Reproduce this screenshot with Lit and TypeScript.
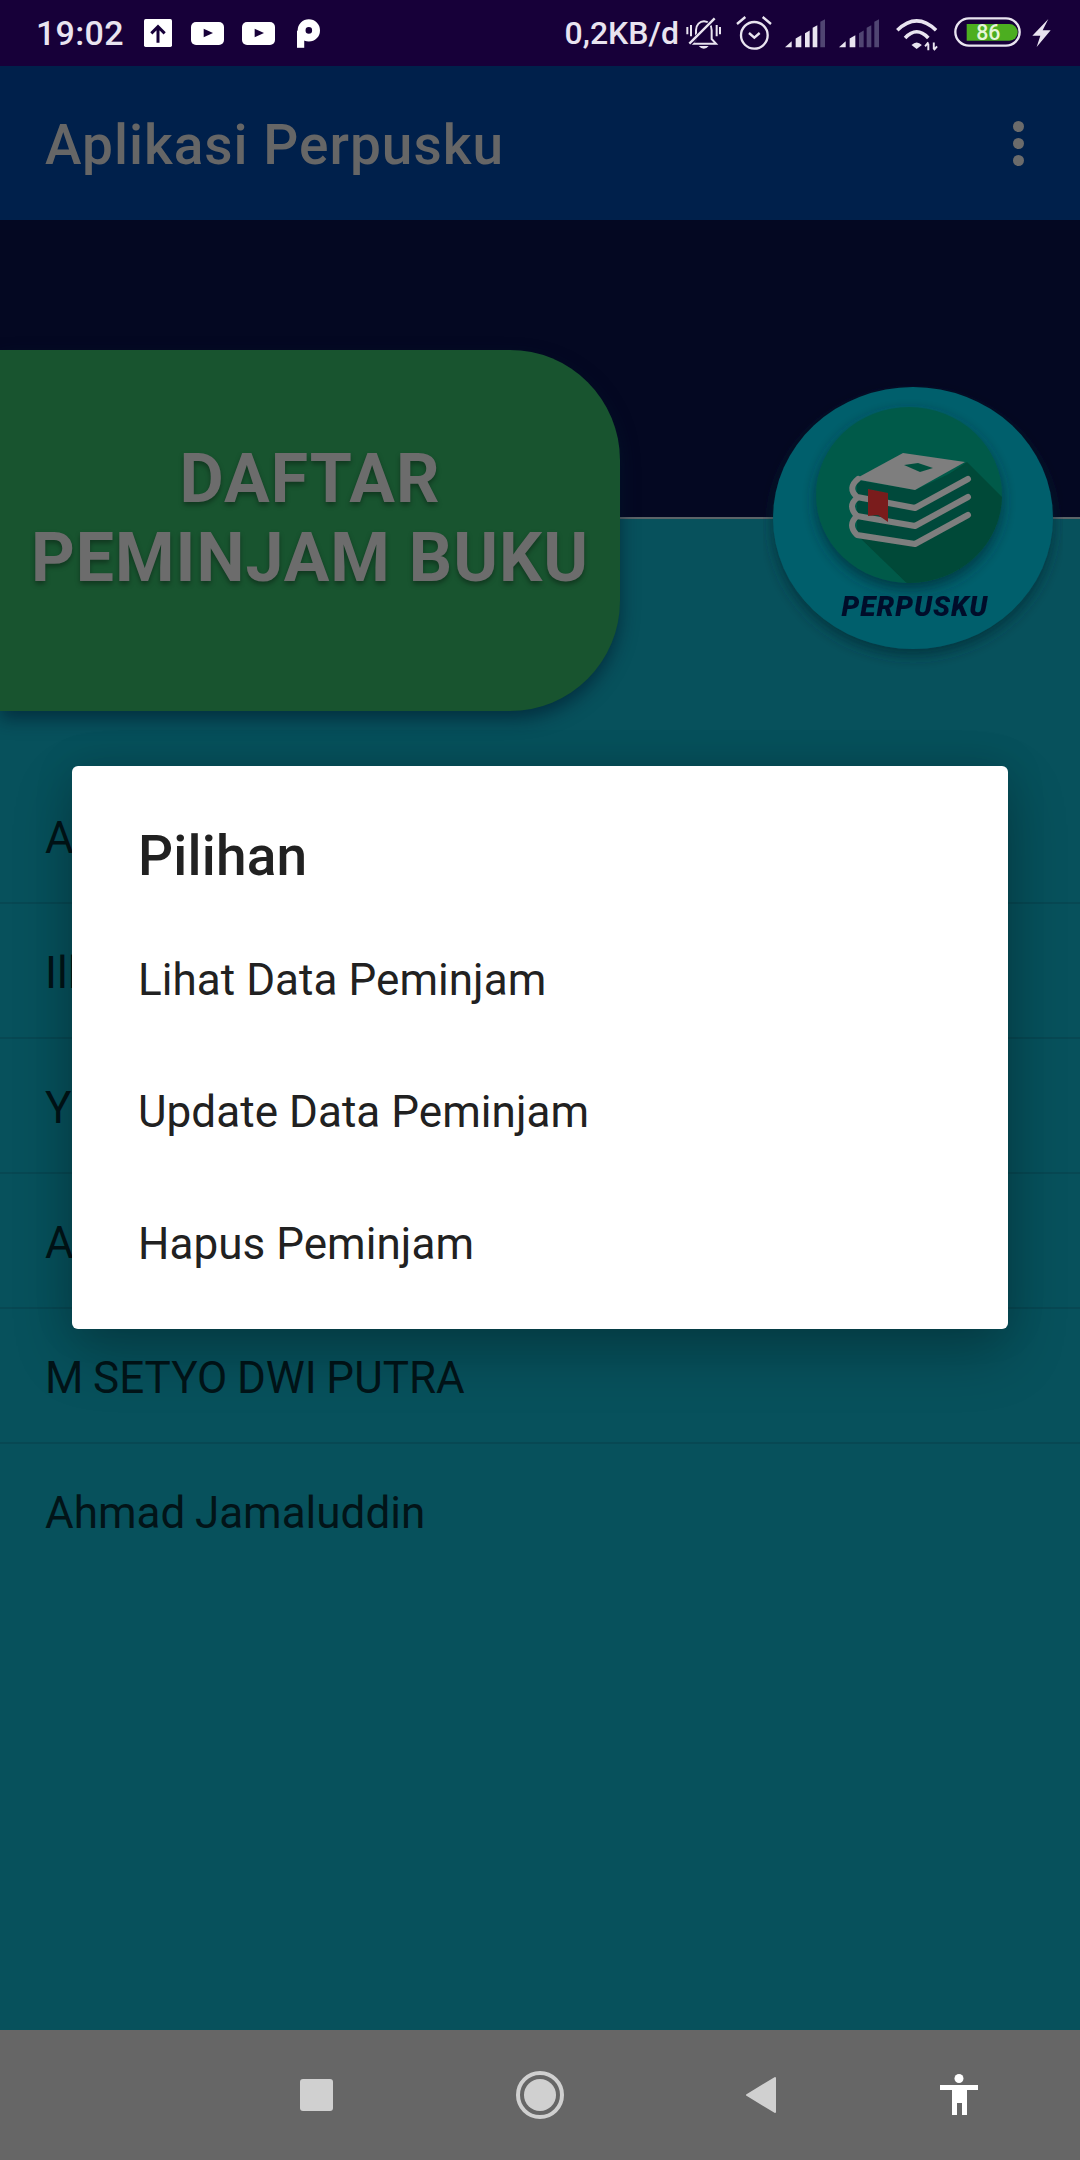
import { LitElement, html, css, svg } from 'lit';
import { customElement } from 'lit/decorators.js';

// the first four names are covered by the dialog, only their first letters show
const NAMES = ['A', 'Ill', 'Y', 'A', 'M SETYO DWI PUTRA', 'Ahmad Jamaluddin'];
const OPTIONS = ['Lihat Data Peminjam', 'Update Data Peminjam', 'Hapus Peminjam'];

@customElement('app-root')
export class AppRoot extends LitElement {
  static styles = css`
    :host {
      display: block;
      font-family: Roboto, 'Liberation Sans', sans-serif;
    }

    .screen {
      position: relative;
      display: flex;
      flex-direction: column;
      width: 1080px;
      height: 2160px;
      overflow: hidden;
      background: #07515c;
    }

    /* status bar */
    .status {
      display: flex;
      align-items: center;
      height: 66px;
      flex: none;
      background: #170039;
      color: #e9e4f0;
      font-weight: 500;
    }

    .status svg {
      display: block;
      flex: none;
    }

    .time {
      margin-left: 36px;
      width: 87px;
      font-size: 34px;
      line-height: 66px;
      letter-spacing: 0.3px;
    }

    .speed {
      margin-left: auto;
      font-size: 32px;
      line-height: 66px;
    }

    .i-up { margin-left: 21px; }
    .i-yt { margin-left: 19px; }
    .i-yt2 { margin-left: 18px; }
    .i-p { margin-left: 22px; }
    .i-bell { margin-left: 7px; }
    .i-alarm { margin-left: 15px; }
    .i-sig { margin-left: 13px; }
    .i-sig2 { margin-left: 14px; }
    .i-wifi { margin-left: 17px; margin-top: 3px; }
    .i-batt { margin-left: 16px; margin-top: -2px; }
    .i-bolt { margin: 0 29px 0 11px; }

    /* app bar */
    .appbar {
      display: flex;
      align-items: center;
      justify-content: space-between;
      height: 154px;
      flex: none;
      padding: 0 56px 0 45px;
      box-sizing: border-box;
      background: #00204b;
    }

    .appbar h1 {
      margin: 4px 0 0;
      font-size: 55px;
      font-weight: 500;
      letter-spacing: 1px;
      color: #666;
    }

    .dots {
      display: flex;
      flex-direction: column;
      gap: 6px;
    }

    .dots span {
      width: 11px;
      height: 11px;
      border-radius: 50%;
      background: #6b6b6b;
    }

    /* header area: navy on top, teal below, with a thin line between */
    .hero {
      display: flex;
      align-items: flex-start;
      height: 547px;
      flex: none;
      box-sizing: border-box;
      padding-top: 130px;
      background: linear-gradient(#040822 0, #040822 297px, #5c6468 297px, #5c6468 299px, #07515c 299px);
    }

    .card {
      width: 620px;
      height: 361px;
      flex: none;
      box-sizing: border-box;
      padding-top: 90px;
      border-radius: 0 110px 110px 0;
      background: #18542f;
      box-shadow: 0 8px 18px rgba(0, 25, 45, 0.6);
      color: #6c6c6c;
      font-size: 68px;
      font-weight: 700;
      line-height: 79px;
      letter-spacing: 1px;
      text-align: center;
      text-shadow: 0 3px 5px rgba(0, 0, 0, 0.35);
    }

    .card span {
      display: block;
      filter: blur(0.6px);
    }

    .logo {
      display: block;
      flex: none;
      margin: 27px 0 0 143px;
    }

    /* list */
    .list {
      flex: 1;
      padding-top: 2px;
      background: #07515c;
    }

    .row {
      height: 135px;
      box-sizing: border-box;
      padding-left: 45px;
      border-bottom: 2px solid #074853;
      color: #021418;
      font-size: 44px;
      line-height: 139px;
      word-spacing: -1.3px;
      white-space: nowrap;
    }

    .row:last-child {
      border-bottom: none;
    }

    /* navigation bar */
    .nav {
      display: flex;
      align-items: center;
      height: 130px;
      flex: none;
      background: #666;
    }

    .nav svg {
      display: block;
      flex: none;
    }

    .n-square { margin-left: 300px; margin-top: -1px; }
    .n-home { margin-left: 183px; }
    .n-back { margin-left: 181px; }
    .n-a11y { margin-left: 163px; margin-top: -2px; }

    /* dialog on top of everything */
    .dialog {
      position: absolute;
      left: 72px;
      top: 766px;
      width: 936px;
      height: 563px;
      box-sizing: border-box;
      padding-left: 66px;
      border-radius: 6px;
      background: #fff;
      box-shadow: 0 24px 60px rgba(0, 0, 0, 0.24), 0 0 40px rgba(0, 0, 0, 0.12);
      color: #212121;
    }

    .dialog h2 {
      margin: 0;
      padding-top: 58px;
      height: 148px;
      box-sizing: border-box;
      font-size: 55px;
      font-weight: 500;
      line-height: 64px;
      letter-spacing: 0.2px;
    }

    .option {
      height: 132px;
      font-size: 44px;
      line-height: 132px;
      letter-spacing: 0.05px;
    }
  `;

  private signal(active: number) {
    const bars = [
      'M318 108 L338 90 V108 Z',
      'M350 108 V82 L367 72 V108 Z',
      'M378 108 V66 L392 58 V108 Z',
      'M401 108 V50 L415 42 V108 Z',
      'M424 108 V32 L438 24 V108 Z',
    ];
    return bars.map(
      (d, i) => svg`<path d=${d} fill=${i < active ? '#e9e4f0' : '#504572'}></path>`
    );
  }

  private statusBar() {
    return html`
      <div class="status">
        <span class="time">19:02</span>
        <svg class="i-up" width="28" height="28" viewBox="42 27 84 84">
          <rect x="42" y="27" width="84" height="84" rx="5" fill="#fff"></rect>
          <path d="M84 98 V52 M64 70 L84 50 L104 70" fill="none" stroke="#170039" stroke-width="9"></path>
        </svg>
        <svg class="i-yt" width="33" height="23" viewBox="184 35 99 69">
          <rect x="184" y="35" width="99" height="69" rx="15" fill="#fff"></rect>
          <path d="M222 55 L250 68 L222 81 Z" fill="#170039"></path>
        </svg>
        <svg class="i-yt2" width="33" height="23" viewBox="184 35 99 69">
          <rect x="184" y="35" width="99" height="69" rx="15" fill="#fff"></rect>
          <path d="M222 55 L250 68 L222 81 Z" fill="#170039"></path>
        </svg>
        <svg class="i-p" width="23" height="29" viewBox="498 27 70 87">
          <circle cx="534" cy="61" r="22" fill="none" stroke="#fff" stroke-width="24"></circle>
          <rect x="498" y="62" width="22" height="52" fill="#fff"></rect>
        </svg>

        <span class="speed">0,2KB/d</span>
        <svg class="i-bell" width="35" height="33" viewBox="20 20 105 99">
          <g fill="none" stroke="#e9e4f0" stroke-width="6">
            <path d="M38 100 L50 86 V60 C50 42 62 33 74 33 C86 33 97 42 97 60 V86 L110 100 Z"></path>
            <path d="M24 50 V72 M35 44 V78 M112 44 V78 M122 50 V72"></path>
          </g>
          <path d="M30 102 L108 22" stroke="#170039" stroke-width="13"></path>
          <path d="M30 100 L106 24" stroke="#e9e4f0" stroke-width="7"></path>
          <path d="M58 107 H88 Q74 124 58 107 Z" fill="#e9e4f0"></path>
        </svg>
        <svg class="i-alarm" width="36" height="35" viewBox="170 17 108 105">
          <g fill="none" stroke="#e9e4f0" stroke-width="7">
            <circle cx="225" cy="75" r="40"></circle>
            <path d="M209 68 L225 82 L241 68"></path>
            <path d="M173 41 L198 20 M250 20 L275 41"></path>
          </g>
        </svg>
        <svg class="i-sig" width="40" height="29" viewBox="318 24 120 86">${this.signal(4)}</svg>
        <svg class="i-sig2" width="40" height="29" viewBox="318 24 120 86">${this.signal(2)}</svg>
        <svg class="i-wifi" width="42" height="34" viewBox="48 22 130 102">
          <g fill="none" stroke="#e9e4f0" stroke-width="11">
            <path d="M52 58 Q112 0 172 58"></path>
            <path d="M76 82 Q112 44 148 82"></path>
          </g>
          <path d="M96 104 Q112 88 128 104 L112 116 Z" fill="#e9e4f0"></path>
          <path d="M148 100 V120 M138 108 L148 96 M165 96 V116 M175 108 L165 120" stroke="#e9e4f0" stroke-width="6" fill="none"></path>
        </svg>
        <svg class="i-batt" width="67" height="30" viewBox="222 22 201 90">
          <rect x="226" y="26" width="193" height="82" rx="41" fill="none" stroke="#e9e4f0" stroke-width="7"></rect>
          <path d="M260 43 H388 A25 25 0 0 1 388 93 H260 Z" fill="#4cae20"></path>
          <text x="325" y="90" text-anchor="middle" font-size="64" font-weight="500" fill="#e4f5d8">86</text>
        </svg>
        <svg class="i-bolt" width="19" height="28" viewBox="456 28 57 84">
          <path d="M505 28 L457 78 H481 L470 112 L512 62 H488 Z" fill="#e9e4f0"></path>
        </svg>
      </div>
    `;
  }

  private logo() {
    // drawn in full-page pixel coordinates, hence the viewBox origin
    return html`
      <svg class="logo" width="300" height="300" viewBox="763 377 300 300">
        <defs>
          <clipPath id="inner"><ellipse cx="909" cy="495" rx="93" ry="88"></ellipse></clipPath>
          <filter id="soft" x="-20%" y="-20%" width="140%" height="140%">
            <feGaussianBlur stdDeviation="0.7"></feGaussianBlur>
          </filter>
          <filter id="drop" x="-20%" y="-20%" width="140%" height="140%">
            <feDropShadow dx="0" dy="6" stdDeviation="7" flood-color="#002a36" flood-opacity="0.7"></feDropShadow>
          </filter>
        </defs>
        <ellipse cx="913" cy="518" rx="140" ry="131" fill="#055f6c" filter="url(#drop)"></ellipse>
        <ellipse cx="909" cy="495" rx="93" ry="88" fill="#065a4a" filter="url(#drop)"></ellipse>
        <g filter="url(#soft)">
          <g clip-path="url(#inner)">
            <path d="M967 462 L1030 525 L950 625 L857 535 Z" fill="#034838"></path>
          </g>
          <path d="M857 480 L915 490 L968 465 V515 L915 544 L857 535 Z" fill="#034a3a"></path>
          <path d="M857 478 L903 453 L965 462 L915 490 L860 480 Z" fill="#7e7e7e"></path>
          <path d="M904 465 L918 463 L933 468 L920 472 Z" fill="#03503e"></path>
          <g fill="none" stroke="#7e7e7e" stroke-width="6" stroke-linecap="round" stroke-linejoin="round">
            <path d="M858 479 Q847 488 857 497 L915 508 L968 479"></path>
            <path d="M857 498 Q847 506 857 516 L915 526 L968 497"></path>
            <path d="M857 516 Q847 525 857 535 L915 544 L968 515"></path>
          </g>
          <path d="M868 489 L888 493 V522 L878 515 L868 516 Z" fill="#7a1c1f"></path>
          <text x="915" y="616" text-anchor="middle" font-size="28" font-weight="900" font-style="italic" letter-spacing="1" fill="#03102c">PERPUSKU</text>
        </g>
      </svg>
    `;
  }

  private navBar() {
    return html`
      <div class="nav">
        <svg class="n-square" width="33" height="32" viewBox="0 0 33 32">
          <rect width="33" height="32" rx="3" fill="#d0d0d0"></rect>
        </svg>
        <svg class="n-home" width="48" height="48" viewBox="0 0 48 48">
          <circle cx="24" cy="24" r="22" fill="none" stroke="#d0d0d0" stroke-width="4"></circle>
          <circle cx="24" cy="24" r="16" fill="#d0d0d0"></circle>
        </svg>
        <svg class="n-back" width="32" height="38" viewBox="0 0 32 38">
          <path d="M2 19 L30 2 V36 Z" fill="#d0d0d0" stroke="#d0d0d0" stroke-width="2" stroke-linejoin="round"></path>
        </svg>
        <svg class="n-a11y" width="38" height="41" viewBox="0 0 38 41">
          <circle cx="19" cy="4.5" r="4.5" fill="#fff"></circle>
          <path d="M0 11 H38 V16 H27 V41 H22 V29 H17 V41 H12 V16 H0 Z" fill="#fff"></path>
        </svg>
      </div>
    `;
  }

  render() {
    return html`
      <div class="screen">
        ${this.statusBar()}
        <header class="appbar">
          <h1>Aplikasi Perpusku</h1>
          <div class="dots"><span></span><span></span><span></span></div>
        </header>
        <section class="hero">
          <div class="card"><span>DAFTAR<br />PEMINJAM BUKU</span></div>
          ${this.logo()}
        </section>
        <main class="list">
          ${NAMES.map((n) => html`<div class="row">${n}</div>`)}
        </main>
        ${this.navBar()}
        <div class="dialog">
          <h2>Pilihan</h2>
          ${OPTIONS.map((o) => html`<div class="option">${o}</div>`)}
        </div>
      </div>
    `;
  }
}
